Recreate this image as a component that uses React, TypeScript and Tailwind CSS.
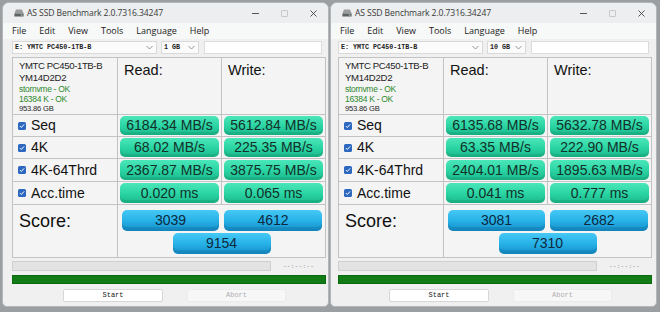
import React from "react";

type Bench = {
  size: string;
  sizeW: string;
  read: string[];
  write: string[];
  score: [string, string, string];
};

const rows = ["Seq", "4K", "4K-64Thrd", "Acc.time"];

const left: Bench = {
  size: "1 GB",
  sizeW: "w-[38px]",
  read: ["6184.34 MB/s", "68.02 MB/s", "2367.87 MB/s", "0.020 ms"],
  write: ["5612.84 MB/s", "225.35 MB/s", "3875.75 MB/s", "0.065 ms"],
  score: ["3039", "4612", "9154"],
};

const right: Bench = {
  size: "10 GB",
  sizeW: "w-[39px]",
  read: ["6135.68 MB/s", "63.35 MB/s", "2404.01 MB/s", "0.041 ms"],
  write: ["5632.78 MB/s", "222.90 MB/s", "1895.63 MB/s", "0.777 ms"],
  score: ["3081", "2682", "7310"],
};

const ui = { fontFamily: '"Open Sans", "Noto Sans", sans-serif' };
const arial = { fontFamily: '"Liberation Sans", Arial, sans-serif' };
const mono = { fontFamily: '"Liberation Mono", "DejaVu Sans Mono", monospace' };

function Chevron() {
  return (
    <svg width="7" height="5" viewBox="0 0 7 5" className="shrink-0">
      <path d="M0.5 1 L3.5 4 L6.5 1" fill="none" stroke="#8a8a8a" strokeWidth="0.9" />
    </svg>
  );
}

function Check() {
  return (
    <svg width="8" height="8" viewBox="0 0 8 8" className="shrink-0">
      <rect x="0" y="0" width="8" height="8" rx="1.6" fill="#2c68c0" />
      <path d="M1.9 4.1 L3.3 5.5 L6.1 2.4" fill="none" stroke="#ffffff" strokeWidth="1" />
    </svg>
  );
}

function DriveIcon() {
  return (
    <svg width="10" height="8" viewBox="0 0 10 8" className="shrink-0">
      <path d="M2 0.5 L8 0.5 L9.6 4.5 L0.4 4.5 Z" fill="#9a9c9e" />
      <rect x="0.4" y="4.5" width="9.2" height="3" fill="#5d6063" />
      <rect x="6.8" y="5.5" width="1.6" height="1" fill="#b8e0b8" />
    </svg>
  );
}

function ResultBox({ value }: { value: string }) {
  return (
    <div
      className="h-full w-full rounded-[5px] flex items-center justify-center text-[14px] text-[#13302a] bg-linear-to-b from-[#4ae6b9] via-[#2bd6a4] to-[#1bb88b] shadow-[inset_0_-3px_0_rgba(0,90,60,0.12)]"
      style={arial}
    >
      {value}
    </div>
  );
}

function ScoreBox({ value, w }: { value: string; w: string }) {
  return (
    <div
      className={`${w} h-[21px] rounded-[5px] flex items-center justify-center text-[14px] text-[#0d2940] bg-linear-to-b from-[#45c9f5] via-[#27b2e8] to-[#1590c8] shadow-[inset_0_-4px_0_rgba(0,60,110,0.15)]`}
      style={arial}
    >
      {value}
    </div>
  );
}

function BenchWindow({ data, pad }: { data: Bench; pad: string }) {
  return (
    <div className="flex flex-col w-[327px] h-[305px] bg-[#f0f0f0] rounded-t-[7px] rounded-b-[5px] border border-[#b4b7ba] overflow-hidden">
      {/* title bar */}
      <div className="flex items-center h-[20px] bg-[#eceeef] text-[#2b2b2b]" style={ui}>
        <div className="pl-[11px] pr-[3px] flex items-center">
          <DriveIcon />
        </div>
        <span className="text-[8.6px] tracking-[-0.1px] text-[#3a3a3a]">AS SSD Benchmark 2.0.7316.34247</span>
        <div className="ml-auto flex items-center h-full">
          <div className="w-[29px] flex justify-center">
            <div className="w-[7px] h-[1px] bg-[#555]" />
          </div>
          <div className="w-[29px] flex justify-center">
            <div className="w-[7px] h-[7px] border border-[#c8c8c8] rounded-[1px]" />
          </div>
          <div className="w-[29px] flex justify-center pr-[1px]">
            <svg width="7" height="7" viewBox="0 0 7 7">
              <path d="M0.5 0.5 L6.5 6.5 M6.5 0.5 L0.5 6.5" stroke="#444" strokeWidth="0.9" />
            </svg>
          </div>
        </div>
      </div>

      {/* menu */}
      <div className="flex items-center h-[16px] bg-[#f7f8f8] pl-[9px] gap-[13px] text-[9px] text-[#222]" style={ui}>
        <span>File</span>
        <span>Edit</span>
        <span>View</span>
        <span>Tools</span>
        <span>Language</span>
        <span>Help</span>
      </div>

      <div className={`flex flex-col ${pad}`}>
        {/* combo row */}
        <div className="flex items-center mt-[2px] h-[13px]">
          <div className="w-[145px] h-full bg-[#fbfbfb] border border-[#d9d9d9] flex items-center pl-[2px] pr-[3px]">
            <span className="text-[6.7px] font-bold text-[#222] flex-1" style={mono}>E: YMTC PC450-1TB-B</span>
            <Chevron />
          </div>
          <div className={`${data.sizeW} ml-[4px] h-full bg-[#fbfbfb] border border-[#d9d9d9] flex items-center pl-[2px] pr-[3px]`}>
            <span className="text-[6.7px] font-bold text-[#222] flex-1" style={mono}>{data.size}</span>
            <Chevron />
          </div>
          <div className="w-[118px] ml-[5px] h-full bg-white border border-[#dcdcdc]" />
        </div>

        {/* grid */}
        <div className="mt-[3px] w-[314px] grid grid-cols-[105px_104px_104px] border-l border-t border-[#c3c3c3] bg-[#f4f4f4]">
          <div className="h-[57px] border-r border-b border-[#c3c3c3] pl-[6px] pt-[2px] text-[#1e1e1e]" style={arial}>
            <div className="text-[9.6px] leading-[12px] tracking-[-0.4px]">YMTC PC450-1TB-B</div>
            <div className="text-[9.6px] leading-[12px] tracking-[-0.3px]">YM14D2D2</div>
            <div className="text-[8.5px] leading-[10px] text-[#2e8a2e] tracking-[-0.3px]">stornvme - OK</div>
            <div className="text-[8.5px] leading-[10px] text-[#2e8a2e] tracking-[-0.3px]">16384 K - OK</div>
            <div className="text-[7.6px] leading-[10px] tracking-[-0.2px]">953.86 GB</div>
          </div>
          <div className="h-[57px] border-r border-b border-[#c3c3c3] pl-[6px] pt-[2px] text-[14.5px] text-[#111]" style={arial}>
            Read:
          </div>
          <div className="h-[57px] border-r border-b border-[#c3c3c3] pl-[6px] pt-[2px] text-[14.5px] text-[#111]" style={arial}>
            Write:
          </div>

          {rows.map((r, i) => (
            <React.Fragment key={r}>
              <div
                className={`${i < 2 ? "h-[22px]" : "h-[23px]"} border-r border-b border-[#c3c3c3] flex items-center pl-[5px] gap-[5px] text-[14px] text-[#111]`}
                style={arial}
              >
                <Check />
                <span>{r}</span>
              </div>
              <div className={`${i < 2 ? "h-[22px]" : "h-[23px]"} border-r border-b border-[#c3c3c3] px-[2px] py-[1px]`}>
                <ResultBox value={data.read[i]} />
              </div>
              <div className={`${i < 2 ? "h-[22px]" : "h-[23px]"} border-r border-b border-[#c3c3c3] px-[2px] py-[1px]`}>
                <ResultBox value={data.write[i]} />
              </div>
            </React.Fragment>
          ))}

          <div className="h-[53px] border-r border-b border-[#c3c3c3] pl-[6px] pt-[3px] text-[18px] text-[#111]" style={arial}>
            Score:
          </div>
          <div className="col-span-2 h-[53px] border-r border-b border-[#c3c3c3] flex flex-col pt-[5px]">
            <div className="flex gap-[5px] pl-[4px]">
              <ScoreBox value={data.score[0]} w="w-[97px]" />
              <ScoreBox value={data.score[1]} w="w-[98px]" />
            </div>
            <div className="flex justify-center mt-[2px]">
              <ScoreBox value={data.score[2]} w="w-[98px]" />
            </div>
          </div>
        </div>

        {/* progress */}
        <div className="flex items-center mt-[3px] h-[10px] w-[314px]">
          <div className="w-[259px] h-full bg-[#e3e3e3] border border-[#d0d0d0]" />
          <div className="flex-1 text-center text-[6px] text-[#777] tracking-[0.3px]" style={mono}>--:--:--</div>
        </div>

        <div className="mt-[4px] h-[9px] w-[314px] bg-[#117c16] border border-[#0b6a10]" />

        {/* buttons */}
        <div className="flex mt-[5px] pl-[51px] gap-[24px]">
          <div className="w-[100px] h-[13px] bg-white border border-[#d6d6d6] rounded-[2px] flex items-center justify-center text-[7px] text-[#222]" style={mono}>
            Start
          </div>
          <div className="w-[99px] h-[13px] bg-[#f7f7f7] border border-[#ebebeb] rounded-[2px] flex items-center justify-center text-[7px] text-[#b0b0b0]" style={mono}>
            Abort
          </div>
        </div>
      </div>
    </div>
  );
}

export default function App() {
  return (
    <div className="w-[660px] h-[312px] bg-[#9c9fa2] flex gap-[1px] pl-[2px] pt-[2px] overflow-hidden">
      <BenchWindow data={left} pad="pl-[9px]" />
      <BenchWindow data={right} pad="pl-[7px]" />
    </div>
  );
}
